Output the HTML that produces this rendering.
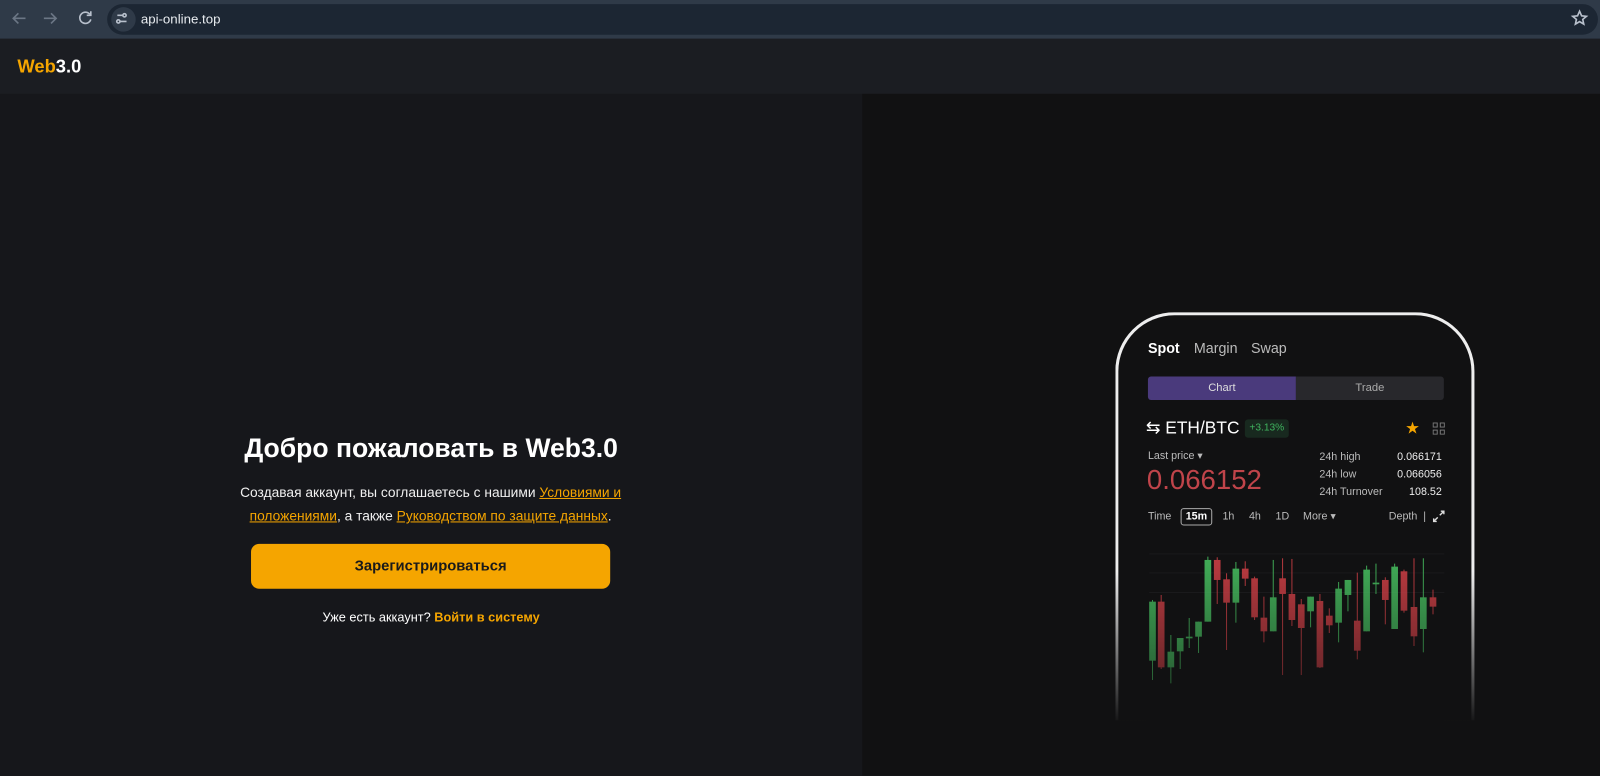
<!DOCTYPE html>
<html><head><meta charset="utf-8"><style>
*{margin:0;padding:0;box-sizing:border-box}
body{width:1600px;height:760px;overflow:hidden;background:#16171b;font-family:"Liberation Sans",sans-serif;position:relative;color:#fff}
#w{position:absolute;left:0;top:0;width:1568px;height:745px;transform:scale(1.0204);transform-origin:0 0}
.a{position:absolute;white-space:nowrap}
</style></head><body><div id="w">
<div class="a" style="left:0;top:0;width:1600px;height:38px;background:#2f3a48"></div>
<div class="a" style="left:105px;top:4px;width:1461px;height:30px;border-radius:15px;background:#1c2633"></div>
<div class="a" style="left:109px;top:7px;width:24px;height:24px;border-radius:12px;background:#2f3a48"></div>
<svg class="a" style="left:0;top:0" width="1600" height="38">
<g stroke="#6b7685" stroke-width="1.6" fill="none"><path d="M25 18H13M18 13l-5 5 5 5"/><path d="M43 18h12M50 13l5 5-5 5"/></g>
<g stroke="#b8c0cc" stroke-width="1.6" fill="none"><path d="M88 14a5.5 5.5 0 1 0 1 5"/><path d="M89 11v4h-4"/>
<path d="M115 15h6M118 21h6"/><circle cx="116" cy="21" r="1.6"/><circle cx="122" cy="15" r="1.6"/>
<path d="M1548 11l2 4.5 4.7.5-3.6 3 1 4.6-4.1-2.4-4.1 2.4 1-4.6-3.6-3 4.7-.5z"/></g>
</svg>
<div class="a" style="left:138px;top:11px;font-size:13px;color:#e8ecf0">api-online.top</div>
<div class="a" style="left:0;top:38px;width:1600px;height:54px;background:#1b1d22"></div>
<div class="a" style="left:17px;top:55px;font-size:18px;font-weight:bold"><span style="color:#f5a500">Web</span>3.0</div>
<div class="a" style="left:845px;top:92px;width:755px;height:668px;background:#111112"></div>

<div class="a" style="left:0;width:845px;top:424px;text-align:center;font-size:26px;font-weight:bold">Добро пожаловать в Web3.0</div>
<div class="a" style="left:222px;width:400px;top:471px;text-align:center;font-size:13.5px;line-height:23px;white-space:normal;color:#f0f0f0">Создавая аккаунт, вы соглашаетесь с нашими <u style="color:#f5a500">Условиями и положениями</u>, а также <u style="color:#f5a500">Руководством по защите данных</u>.</div>
<div class="a" style="left:246px;top:533px;width:352px;height:44px;border-radius:8px;background:#f5a500;color:#1a1a1a;font-size:14.5px;font-weight:bold;text-align:center;line-height:44px">Зарегистрироваться</div>
<div class="a" style="left:0;width:845px;top:598px;text-align:center;font-size:12.5px">Уже есть аккаунт? <b style="color:#f5a500">Войти в систему</b></div>

<div class="a" style="left:1093px;top:306px;width:352px;height:400px;border:3px solid #eee;border-bottom:none;border-radius:58px 58px 0 0;background:#111112"></div>
<div class="a" style="left:1088px;top:560px;width:362px;height:150px;background:linear-gradient(rgba(17,17,18,0),#111112)"></div>
<div class="a" style="left:1125px;top:333px;font-size:14px;font-weight:bold">Spot</div>
<div class="a" style="left:1170px;top:333px;font-size:14px;color:#bbb">Margin</div>
<div class="a" style="left:1226px;top:333px;font-size:14px;color:#bbb">Swap</div>
<div class="a" style="left:1125px;top:369px;width:145px;height:23px;background:#4a3a7c;border-radius:3px 0 0 3px;font-size:11px;text-align:center;line-height:23px;color:#ddd">Chart</div>
<div class="a" style="left:1270px;top:369px;width:145px;height:23px;background:#28282c;border-radius:0 3px 3px 0;font-size:11px;text-align:center;line-height:23px;color:#aaa">Trade</div>
<div class="a" style="left:1123px;top:410px;font-size:17px">⇆ ETH/BTC</div>
<div class="a" style="left:1220px;top:411px;width:43px;height:18px;background:#18291f;border-radius:3px;font-size:10px;color:#3fb35e;text-align:center;line-height:18px">+3.13%</div>
<div class="a" style="left:1377px;top:410px;font-size:16px;color:#f5a500">★</div>
<svg class="a" style="left:1404px;top:414px" width="12" height="12"><g fill="none" stroke="#777"><rect x="0.5" y="0.5" width="4" height="4"/><rect x="7.5" y="0.5" width="4" height="4"/><rect x="0.5" y="7.5" width="4" height="4"/><rect x="7.5" y="7.5" width="4" height="4"/></g></svg>
<div class="a" style="left:1125px;top:441px;font-size:10.5px;color:#bbb">Last price ▾</div>
<div class="a" style="left:1124px;top:455px;font-size:27px;color:#c0444a">0.066152</div>
<div class="a" style="left:1293px;top:440px;font-size:10.5px;color:#bbb;line-height:17px">24h high<br>24h low<br>24h Turnover</div>
<div class="a" style="left:1333px;width:80px;top:440px;font-size:10.5px;color:#eee;line-height:17px;text-align:right">0.066171<br>0.066056<br>108.52</div>
<div class="a" style="left:1125px;top:500px;font-size:10.5px;color:#bbb">Time</div>
<div class="a" style="left:1157px;top:498px;width:31px;height:17px;border:1px solid #aaa;border-radius:3px;font-size:10.5px;text-align:center;line-height:15px;font-weight:bold">15m</div>
<div class="a" style="left:1198px;top:500px;font-size:10.5px;color:#bbb">1h</div>
<div class="a" style="left:1224px;top:500px;font-size:10.5px;color:#bbb">4h</div>
<div class="a" style="left:1250px;top:500px;font-size:10.5px;color:#bbb">1D</div>
<div class="a" style="left:1277px;top:500px;font-size:10.5px;color:#bbb">More ▾</div>
<div class="a" style="left:1361px;top:500px;font-size:10.5px;color:#bbb">Depth &nbsp;|</div>
<svg class="a" style="left:1404px;top:500px" width="12" height="12"><g stroke="#ddd" stroke-width="1.4" fill="none"><path d="M7 5l4-4M8 1h3v3M5 7l-4 4M1 8v3h3"/></g></svg>

<svg class="a" style="left:1068.6px;top:519.6px" width="353" height="176.5" viewBox="0 0 1080 540">
<defs><linearGradient id="f" x1="0" y1="0" x2="0" y2="1"><stop offset="0.1" stop-color="#fff"/><stop offset="0.9" stop-color="#fff" stop-opacity="0.45"/></linearGradient>
<mask id="m"><rect width="1080" height="540" fill="url(#f)"/></mask></defs>
<g stroke="#1e1e20" stroke-width="2"><path d="M175 70H1060M175 127H1060M175 186H1060"/></g>
<g mask="url(#m)" id="c"></g>
</svg>
</div>
<script>
var d=[[185,213,390,208,448,'g'],[211,213,410,193,415,'r'],[240,363,410,313,458,'g'],[268,322,362,322,415,'g'],[295,318,323,262,352,'g'],[323,273,318,273,367,'g'],[351,88,273,78,273,'g'],[379,88,148,80,220,'r'],[407,146,216,128,358,'r'],[435,114,216,94,276,'g'],[463,114,144,92,166,'r'],[491,143,260,138,268,'r'],[519,261,302,198,335,'r'],[547,200,302,88,302,'g'],[575,143,190,83,433,'r'],[603,190,268,85,286,'r'],[631,221,292,205,433,'r'],[659,198,242,198,290,'g'],[687,211,410,190,412,'r'],[715,255,284,233,307,'r'],[743,174,276,154,335,'g'],[771,148,193,148,242,'g'],[799,270,360,126,386,'r'],[827,117,302,105,302,'g'],[855,156,161,99,190,'g'],[883,148,208,140,281,'r'],[911,108,295,99,295,'g'],[939,122,240,117,246,'r'],[969,229,317,83,346,'r'],[997,200,295,83,365,'g'],[1026,200,228,177,251,'r']];
var s='';d.forEach(function(c){var col=c[5]=='g'?'#43b35a':'#c23c42';s+='<rect x="'+(c[0]-1.5)+'" y="'+c[3]+'" width="3" height="'+(c[4]-c[3])+'" fill="'+col+'"/><rect x="'+(c[0]-10)+'" y="'+c[1]+'" width="20" height="'+Math.max(4,c[2]-c[1])+'" fill="'+col+'"/>';});
document.getElementById('c').innerHTML=s;
</script>
</body></html>
